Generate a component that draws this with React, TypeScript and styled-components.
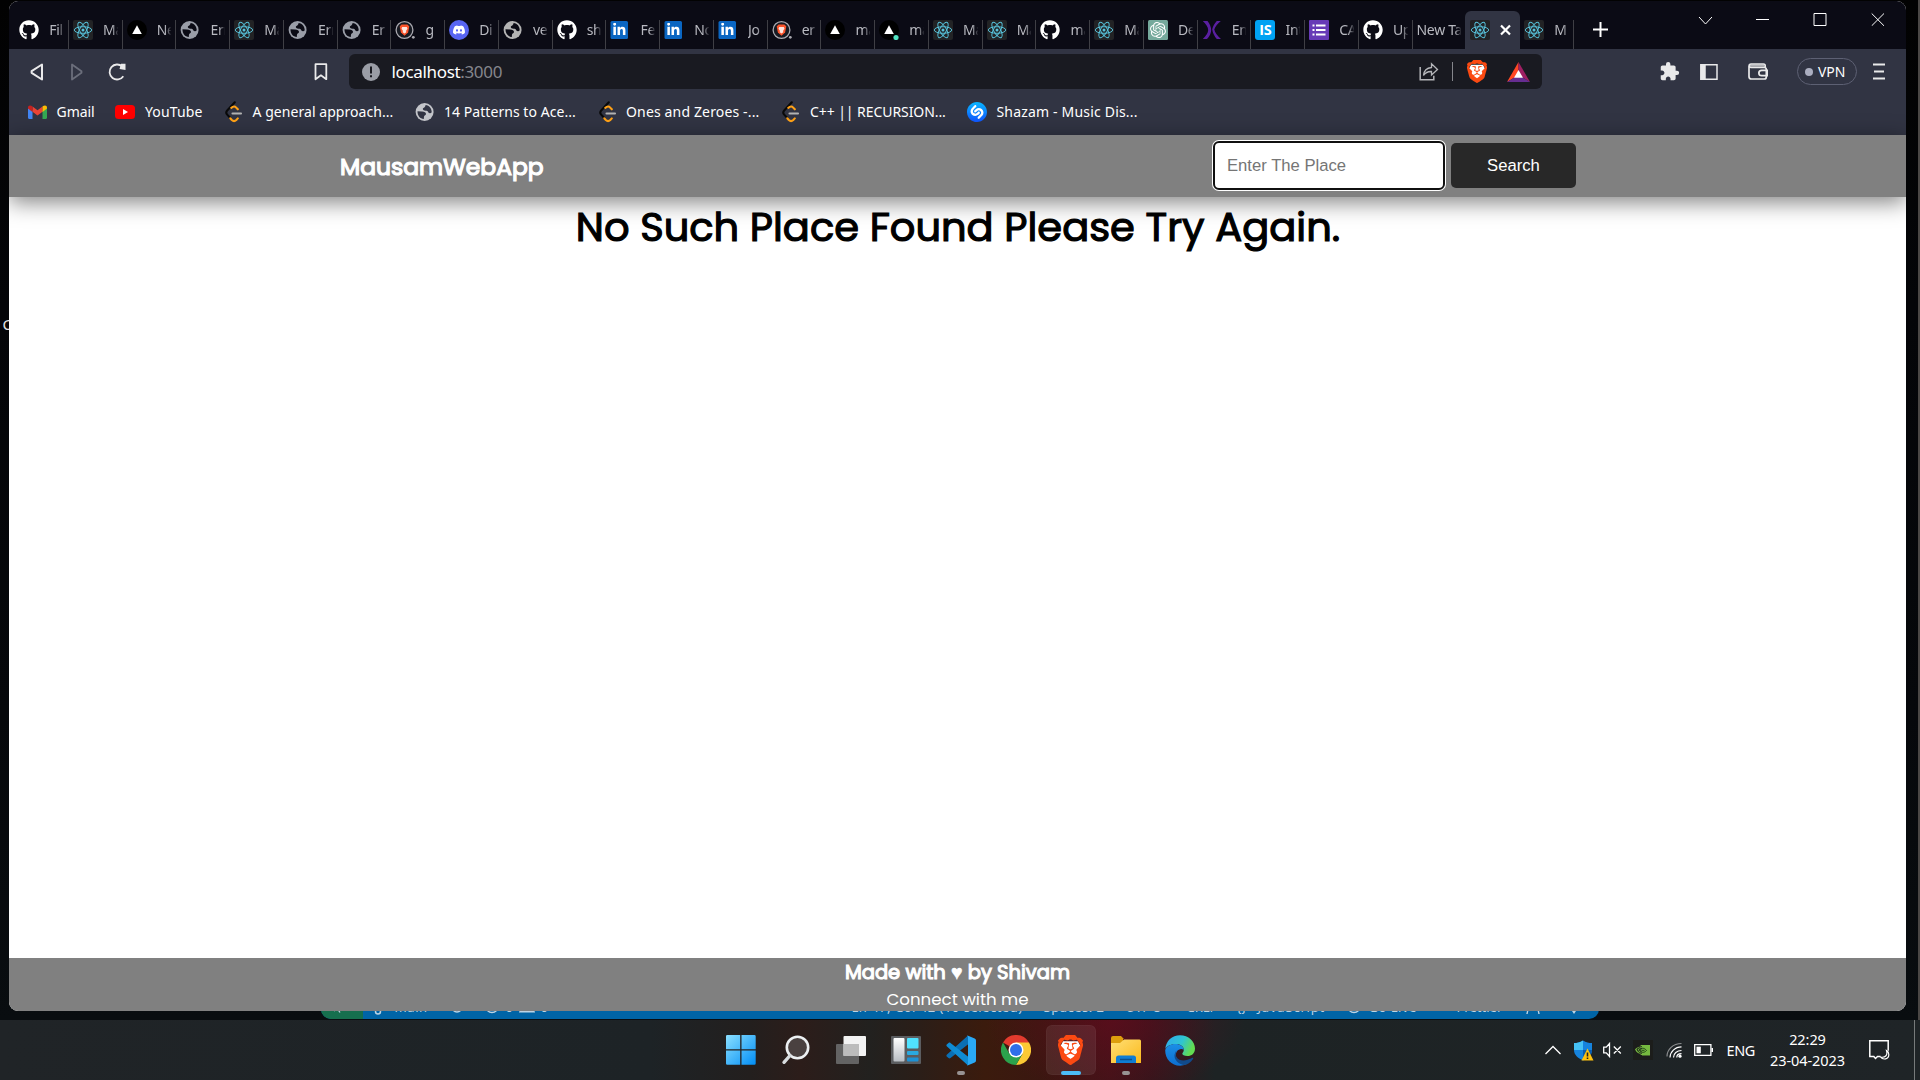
import React from "react";
import styled, { createGlobalStyle, css } from "styled-components";
import { FaGithub, FaDiscord, FaLinkedinIn } from "react-icons/fa";
import { SiBrave, SiShazam, SiOpenai, SiNvidia } from "react-icons/si";
import { MdExtension } from "react-icons/md";

const ui = `"Segoe UI", "Noto Sans", "Open Sans", sans-serif`;
const poppins = `Poppins, Inter, "Noto Sans", sans-serif`;

const Global = createGlobalStyle`
  * { box-sizing: border-box; }
  html, body { margin: 0; padding: 0; background: #050608; overflow: hidden; }
  svg { display: block; flex: none; }
`;

/* ---------- desktop ---------- */
const Screen = styled.div`
  width: 1920px;
  height: 1080px;
  display: grid;
  grid-template-rows: 1020px 60px;
  overflow: hidden;
  font-family: ${ui};
`;
const Desktop = styled.main`
  position: relative;
  overflow: hidden;
  background: linear-gradient(#020202 0%, #040508 30%, #06080b 70%, #090d10 100%);
  border-right: 2px solid #4a4745;
`;
const DesktopLabel = styled.span`
  position: absolute;
  left: 2.5px;
  top: 315px;
  font-size: 15px;
  line-height: 19px;
  color: #e4e4e4;
`;
const BrowserWindow = styled.section`
  position: absolute;
  left: 9px;
  top: 1px;
  width: 1897px;
  height: 1010px;
  display: flex;
  flex-direction: column;
  border-radius: 9px;
  overflow: hidden;
  background: #fff;
`;

/* ---------- editor status bar behind the browser ---------- */
const StatusBar = styled.section`
  position: absolute;
  left: 321px;
  top: 992px;
  width: 1278px;
  height: 27px;
  display: flex;
  background: #0064a6;
  border-radius: 0 0 10px 10px;
  overflow: hidden;
  color: #bcd3e4;
  font-size: 13px;
  line-height: 31px;
  white-space: nowrap;
`;
const Remote = styled.div`
  width: 42px;
  background: #166f4e;
  padding: 8px 0 0 12px;
`;
const StatusItem = styled.div<{ $w: number; $ls?: number }>`
  width: ${(p) => p.$w}px;
  letter-spacing: ${(p) => p.$ls ?? 0}px;
  flex: none;
  svg { margin-top: 7px; }
`;

/* ---------- tab strip ---------- */
const TabStrip = styled.div`
  height: 48px;
  flex: none;
  background: #0b0b15;
  display: flex;
  align-items: flex-end;
  padding-left: 6px;
`;
const TabBox = styled.div<{ $active?: boolean; $plain?: boolean }>`
  width: 53.76px;
  height: 29px;
  flex: none;
  display: flex;
  align-items: flex-start;
  gap: 10px;
  padding: 0 4px 0 ${(p) => (p.$plain ? "4px" : "4.2px")};
  border-right: 1px solid #3f3f45;
  color: #b8b9c0;
  ${(p) =>
    p.$active &&
    css`
      height: 38px;
      padding-top: 9px;
      padding-right: 0;
      background: #313443;
      border-radius: 6px 6px 0 0;
      border-right: 0;
      margin-left: -1px;
      padding-left: 5.2px;
      width: 54.76px;
    `}
`;
const TabText = styled.span`
  flex: 1;
  min-width: 0;
  overflow: hidden;
  white-space: nowrap;
  font-size: 14px;
  line-height: 20px;
  letter-spacing: -0.3px;
  mask-image: linear-gradient(90deg, #000 calc(100% - 6px), rgba(0, 0, 0, 0.1));
`;
const NewTab = styled.div`
  padding: 0 0 12px 19.5px;
`;
const WindowControls = styled.div`
  margin-left: auto;
  align-self: flex-start;
  display: flex;
  align-items: center;
  gap: 43.6px;
  padding: 11px 21px 0 0;
`;

/* ---------- toolbar ---------- */
const Toolbar = styled.div`
  height: 46px;
  flex: none;
  display: flex;
  align-items: center;
  background: #313443;
  color: #e9e9ea;
  padding-bottom: 1px;
`;
const Slot = styled.div<{ $w: number }>`
  width: ${(p) => p.$w}px;
  flex: none;
  display: flex;
`;
const AddressBar = styled.div`
  width: 1193px;
  height: 35px;
  flex: none;
  display: flex;
  align-items: center;
  border-radius: 6px;
  background: #191a21;
  padding: 0 12px 0 13px;
`;
const Url = styled.div`
  margin-left: 11.5px;
  flex: 1;
  font-size: 17px;
  line-height: 24px;
  letter-spacing: -0.34px;
  color: #fff;
  span { color: #85868c; }
`;
const Divider = styled.div`
  width: 1px;
  height: 19px;
  background: #85868c;
  margin: 0 14px 0 13px;
`;
const Vpn = styled.div`
  width: 60px;
  height: 27px;
  border: 1px solid #5d6073;
  border-radius: 14px;
  display: flex;
  align-items: center;
  gap: 5px;
  padding-left: 7px;
  font-size: 14px;
  letter-spacing: -0.1px;
  color: #fff;
`;
const Dot = styled.i`
  width: 8px;
  height: 8px;
  border-radius: 50%;
  background: #abaec0;
`;

/* ---------- bookmarks ---------- */
const Bookmarks = styled.div`
  height: 40px;
  flex: none;
  display: flex;
  align-items: center;
  background: #313443;
  padding: 0 0 6px 18.5px;
`;
const Bookmark = styled.div<{ $w: number; $ls: number; $gap: number }>`
  width: ${(p) => p.$w}px;
  flex: none;
  display: flex;
  align-items: center;
  gap: ${(p) => p.$gap}px;
  color: #fff;
  font-size: 14px;
  line-height: 20px;
  letter-spacing: ${(p) => p.$ls}px;
  white-space: nowrap;
`;

/* ---------- web page ---------- */
const PageHeader = styled.header`
  position: relative;
  height: 62px;
  flex: none;
  background: #808080;
  box-shadow: 0 5px 22px rgba(0, 0, 0, 0.5);
  display: flex;
  justify-content: space-between;
  align-items: center;
  padding: 0 330px 1px 331px;
`;
const Brand = styled.h1`
  margin: 0;
  font: 400 23.4px/35px ${poppins};
  padding-top: 1px;
  -webkit-text-stroke: 1.2px #fff;
  color: #fff;
`;
const SearchForm = styled.form`
  display: flex;
  align-items: center;
  gap: 6px;
  margin: 0;
`;
const PlaceInput = styled.input`
  width: 232px;
  height: 49px;
  border: 2px solid #101010;
  border-radius: 6px;
  box-shadow: 0 0 0 1px #fff;
  outline: none;
  padding: 0 12px;
  background: #fff;
  font: 16.67px "Liberation Sans", Arial, sans-serif;
  &::placeholder { color: #757575; opacity: 1; }
`;
const SearchButton = styled.button`
  width: 125px;
  height: 45px;
  border: 0;
  border-radius: 5px;
  background: #282828;
  color: #fff;
  font: 16.67px "Liberation Sans", Arial, sans-serif;
`;
const PageBody = styled.div`
  flex: 1;
  text-align: center;
`;
const Message = styled.p`
  position: relative;
  margin: 0;
  padding-left: 1px;
  font: 400 40px/60px ${poppins};
  -webkit-text-stroke: 1.2px #000;
  color: #000;
`;
const PageFooter = styled.footer`
  height: 53px;
  flex: none;
  background: #808080;
  color: #fff;
  text-align: center;
  font-family: ${poppins};
`;
const Credit = styled.div`
  font-size: 19.5px;
  line-height: 29px;
  -webkit-text-stroke: 1.1px #fff;
`;
const Heart = styled.span`
  font-family: "Liberation Sans", sans-serif;
  -webkit-text-stroke: 0.6px #fff;
`;
const Connect = styled.div`
  font-size: 16.67px;
  line-height: 25px;
`;

/* ---------- taskbar ---------- */
const TaskbarRow = styled.footer`
  display: flex;
  background:
    radial-gradient(ellipse 130px 75px at 1115px 0, rgba(105, 10, 30, 0.55), transparent),
    linear-gradient(90deg, #202427 0, #1d2326 650px, #231f1e 750px, #2c1d1a 800px, #22211f 870px, #2b1e18 920px, #3b1b0d 985px, #3a1710 1040px, #421318 1110px, #35151b 1150px, #1d2324 1215px, #1f2427 1920px);
`;
const TaskButtons = styled.div`
  display: flex;
  margin-left: 714px;
`;
const TaskButton = styled.div<{ $active?: boolean }>`
  width: 50px;
  height: 50px;
  margin: 5px 2.45px;
  border-radius: 6px;
  display: grid;
  grid-template-rows: 46px 4px;
  place-items: center;
  svg { margin-top: 4px; }
  ${(p) =>
    p.$active &&
    css`
      background: rgba(255, 255, 255, 0.08);
      box-shadow: inset 0 0 0 1px rgba(255, 255, 255, 0.03);
    `}
`;
const Indicator = styled.i<{ $active?: boolean }>`
  width: ${(p) => (p.$active ? 20 : 8)}px;
  height: 4px;
  border-radius: 2px;
  background: ${(p) => (p.$active ? "#4cbcf8" : "#989393")};
`;
const Tray = styled.div`
  margin-left: auto;
  height: 60px;
  display: flex;
  align-items: center;
  color: #fff;
`;
const Lang = styled.div`
  width: 43px;
  font-size: 14.5px;
  letter-spacing: -0.4px;
`;
const Clock = styled.div`
  width: 76px;
  text-align: center;
  font-size: 14.5px;
  line-height: 21px;
  letter-spacing: -0.08px;
  white-space: nowrap;
`;
const ShowDesktop = styled.div`
  width: 6px;
  height: 60px;
  margin-left: 24.5px;
  border-left: 1px solid #777a7b;
`;

/* ---------- drawings ---------- */
const ReactIcon = () => (
  <svg width="20" height="20" viewBox="0 0 20 20">
    <rect width="20" height="20" rx="2" fill="#222325" />
    <g fill="none" stroke="#58c4dc" strokeWidth="0.95">
      <ellipse cx="10" cy="10" rx="8.7" ry="3.3" />
      <ellipse cx="10" cy="10" rx="8.7" ry="3.3" transform="rotate(60 10 10)" />
      <ellipse cx="10" cy="10" rx="8.7" ry="3.3" transform="rotate(120 10 10)" />
    </g>
    <circle cx="10" cy="10" r="1.5" fill="#58c4dc" />
  </svg>
);
const VercelIcon = ({ dot }: { dot?: boolean }) => (
  <svg width="20" height="20" viewBox="0 0 20 20">
    <circle cx="10" cy="10" r="10" fill="#000" />
    <path d="M10 5.2 14.8 14H5.2z" fill="#fff" />
    {dot && <circle cx="17" cy="17.5" r="2.6" fill="#50e3c2" />}
  </svg>
);
const Globe = ({ c = "#9a9ea8", bg = "#0b0b15" }: { c?: string; bg?: string }) => (
  <svg width="20" height="20" viewBox="0 0 20 20">
    <circle cx="9.6" cy="10" r="9" fill={c} />
    <path
      fill={bg}
      d="M10.6 2.9C14.4 3.3 16.8 6.6 16.7 10.2 15.9 11.8 14 11.6 13.2 10.2 12.7 9.1 12.2 8.8 10.8 8.8 8.5 8.8 7.5 7.8 7.9 6.6 8.3 5.4 10.3 5.5 10.6 2.9ZM2.5 9.2 7 9.4C9.6 9.6 11 10.4 11 12 11 13.5 9.3 13.3 9 14.5L8.8 17C5.2 16.8 2.3 13.5 2.5 9.2Z"
    />
  </svg>
);
const BraveTab = () => (
  <svg width="20" height="20" viewBox="0 0 20 20">
    <circle cx="9.5" cy="10" r="8.4" fill="#171a22" stroke="#aaa9b0" strokeWidth="1.3" />
    <path d="M6.500 4.500h6l1.800 2-1.200 6-3.600 3.300L5.900 12.500 4.700 6.500z" fill="#fb542b" />
    <path d="M7.200 7h4.600l.7 1.800-1.400 2 .2 1.400-1.800 1.400-1.800-1.400.2-1.400-1.400-2z" fill="#fff" opacity=".85" />
    <circle cx="18.3" cy="17.3" r="1.4" fill="#aaa9b0" />
  </svg>
);
const BraveLogo = ({ w, h }: { w: number; h: number }) => (
  <svg width={w} height={h} viewBox="2 0 20 24" preserveAspectRatio="none">
    <path d="M6 5h12l2 4-3 9-5 4-5-4L4 9z" fill="#fff" />
    <SiBrave size={24} color="#fb4a12" />
  </svg>
);
const Discord = () => (
  <svg width="20" height="20" viewBox="0 0 20 20">
    <circle cx="10" cy="10" r="10" fill="#5865f2" />
    <FaDiscord x={3.5} y={3.5} size={13} color="#fff" />
  </svg>
);
const LinkedIn = () => (
  <svg width="20" height="20" viewBox="0 0 20 20">
    <rect x=".5" y="1" width="17.5" height="18" rx="1.5" fill="#0a66c2" />
    <FaLinkedinIn x={2.3} y={2.8} size={14} color="#fff" />
  </svg>
);
const OpenAi = () => (
  <svg width="20" height="20" viewBox="0 0 20 20">
    <rect width="20" height="20" rx="1.5" fill="#75a99c" />
    <SiOpenai x={2} y={2} size={16} color="#fff" />
  </svg>
);
const XIcon = () => (
  <svg width="20" height="20" viewBox="0 0 20 20" fill="#5a1fa0">
    <path d="M.8 1H5.500C7.500 3.500 9.200 7 9.200 10 9.200 13 7.500 16.500 5 19H.8C3.800 16 6.200 13 6.200 10 6.200 7 3.800 4 .8 1Z" />
    <path d="M18.800 1H14.800C12.500 3.500 10.800 6.500 10.200 9.300 10.600 13 12.600 16.500 14.800 19H19C15.800 16 12.600 12.500 12.300 9.500 13.200 6.500 15.800 3.500 18.800 1Z" />
  </svg>
);
const IsText = styled.span`
  width: 20px;
  height: 20px;
  flex: none;
  border-radius: 3px;
  background: #00a2f3;
  color: #fff;
  font: 700 14.5px/20px "Open Sans", sans-serif;
  text-align: center;
  letter-spacing: -0.3px;
`;
const FormsIcon = () => (
  <svg width="20" height="20" viewBox="0 0 20 20">
    <rect width="20" height="20" rx="1" fill="#673ab7" />
    <path d="M3.500 4.500h2v2h-2zM7 4.500h9.500v2H7zM3.500 9h2v2h-2zM7 9h9.500v2H7zM3.500 13.500h2v2h-2zM7 13.500h9.500v2H7z" fill="#fff" />
  </svg>
);
const Gmail = () => (
  <svg width="19" height="14" viewBox="0 0 19 14">
    <path d="M0 3v9.800c0 .7.500 1.200 1.200 1.200H4.500V5.500z" fill="#4285f4" />
    <path d="M19 3v9.800c0 .7-.5 1.200-1.200 1.200h-3.300V5.500z" fill="#34a853" />
    <path d="M4.500 1.500 9.500 5.300l5-3.800v5.300l-5 3.800-5-3.800z" fill="#ea4335" />
    <path d="M14.500 1.500C16.500-.3 19 .2 19 2.500v1.100l-4.500 3.300z" fill="#fbbc04" />
    <path d="M4.500 1.500C2.500-.3 0 .2 0 2.500v1.100l4.500 3.300z" fill="#c5221f" />
  </svg>
);
const YouTube = () => (
  <svg width="20" height="14" viewBox="0 0 20 14">
    <rect width="20" height="14" rx="3.5" fill="#f00" />
    <path d="M8 4v6l5-3z" fill="#fff" />
  </svg>
);
const LeetCode = () => (
  <svg width="18" height="22" viewBox="0 0 18 22" fill="none" strokeWidth="2.1" strokeLinecap="round" strokeLinejoin="round">
    <path d="M9.800 1.300 2.200 9.500C1 10.800 1 12.300 2.200 13.600L5.300 17" stroke="#090909" />
    <path d="M6.300 6.800 7.800 5.900C9 5.200 10.200 5.500 11.200 6.600L12.800 8.300M5.300 17.300 6.800 19C8.200 20.400 10 20.300 11.300 19L12.800 17.400" stroke="#ffa116" />
    <path d="M7.500 12.500h8.500" stroke="#b3b3b3" />
  </svg>
);
const Shazam = () => (
  <svg width="20" height="20" viewBox="0 0 20 20">
    <defs>
      <linearGradient id="shz" x1="0" y1="0" x2="0" y2="1">
        <stop stopColor="#08b6ff" />
        <stop offset="1" stopColor="#1055ff" />
      </linearGradient>
    </defs>
    <circle cx="10" cy="10" r="9" fill="#fff" />
    <SiShazam size={20} fill="url(#shz)" />
  </svg>
);
const line = { fill: "none", stroke: "currentColor" } as const;

type Tab = { icon?: React.ReactNode; text?: string; active?: boolean };
const gh = <FaGithub size={20} color="#fff" />;
const r = <ReactIcon />;
const tabs: Tab[] = [
  { icon: gh, text: "Fil" },
  { icon: r, text: "Ma" },
  { icon: <VercelIcon />, text: "Ne" },
  { icon: <Globe />, text: "Err" },
  { icon: r, text: "Ma" },
  { icon: <Globe />, text: "Err" },
  { icon: <Globe />, text: "Err" },
  { icon: <BraveTab />, text: "g" },
  { icon: <Discord />, text: "Di" },
  { icon: <Globe c="#b4b4b4" />, text: "ve" },
  { icon: gh, text: "sh" },
  { icon: <LinkedIn />, text: "Fe" },
  { icon: <LinkedIn />, text: "No" },
  { icon: <LinkedIn />, text: "Jo" },
  { icon: <BraveTab />, text: "err" },
  { icon: <VercelIcon />, text: "ma" },
  { icon: <VercelIcon dot />, text: "ma" },
  { icon: r, text: "Ma" },
  { icon: r, text: "Ma" },
  { icon: gh, text: "ma" },
  { icon: r, text: "Ma" },
  { icon: <OpenAi />, text: "De" },
  { icon: <XIcon />, text: "En" },
  { icon: <IsText>IS</IsText>, text: "Int" },
  { icon: <FormsIcon />, text: "CA" },
  { icon: gh, text: "Up" },
  { text: "New Ta" },
  { icon: r, active: true },
  { icon: r, text: "M" },
];

const bookmarks = [
  { icon: <Gmail />, text: "Gmail", w: 87.5, ls: -0.05, gap: 10 },
  { icon: <YouTube />, text: "YouTube", w: 109.5, ls: 0.15, gap: 10 },
  { icon: <LeetCode />, text: "A general approach...", w: 190, ls: 0.05, gap: 10 },
  { icon: <Globe c="#c3c5ca" bg="#313443" />, text: "14 Patterns to Ace...", w: 184, ls: 0.05, gap: 9.5 },
  { icon: <LeetCode />, text: "Ones and Zeroes -...", w: 183, ls: 0.15, gap: 9.5 },
  { icon: <LeetCode />, text: "C++ || RECURSION...", w: 185.5, ls: -0.07, gap: 10.5 },
  { icon: <Shazam />, text: "Shazam - Music Dis...", w: 200, ls: 0.18, gap: 9.5 },
];

const TabRow = () => (
  <TabStrip>
    {tabs.map((t, i) => (
      <TabBox key={i} $active={t.active} $plain={!t.icon}>
        {t.icon}
        {t.active ? (
          <svg width="11" height="20" viewBox="0 0 11 20" fill="none" stroke="#fff" strokeWidth="2.2">
            <path d="m1 5.500 9 9m0-9-9 9" />
          </svg>
        ) : (
          <TabText>{t.text}</TabText>
        )}
      </TabBox>
    ))}
    <NewTab>
      <svg width="15" height="15" viewBox="0 0 15 15" fill="none" stroke="#fff" strokeWidth="2">
        <path d="M0 7.500h15M7.500 0v15" />
      </svg>
    </NewTab>
    <WindowControls>
      <svg width="14" height="14" viewBox="0 0 14 14" fill="none" stroke="#fff"><path d="m1 5 6.500 7L14 5" /></svg>
      <svg width="14" height="14" viewBox="0 0 14 14" fill="none" stroke="#fff"><path d="M0 7.500h13" /></svg>
      <svg width="14" height="14" viewBox="0 0 14 14" fill="none" stroke="#fff"><path d="M1 1.500h12v12H1z" /></svg>
      <svg width="14" height="14" viewBox="0 0 14 14" fill="none" stroke="#fff"><path d="m.7 1.500 12.300 12.300m0-12.300L.7 13.800" /></svg>
    </WindowControls>
  </TabStrip>
);

const ToolRow = () => (
  <Toolbar>
    <Slot $w={21} />
    <Slot $w={40}>
      <svg width="14" height="18" viewBox="0 0 14 18" {...line} strokeWidth="2" strokeLinejoin="round"><path d="M12 1.500v15L1.600 9.800V8.200z" /></svg>
    </Slot>
    <Slot $w={37.5}>
      <svg width="14" height="18" viewBox="0 0 14 18" fill="none" stroke="#6b6e7b" strokeWidth="1.8" strokeLinejoin="round"><path d="M2 1.500v15l9.500-6.700V8.200z" /></svg>
    </Slot>
    <Slot $w={206.5}>
      <svg width="19" height="18" viewBox="0 0 19 18" {...line} strokeWidth="1.8">
        <path d="M14.300 3.600A7.500 7.500 0 1 0 15.300 13.200" />
        <path d="M13 .8h4.500V7L11.500 6z" fill="currentColor" stroke="none" />
      </svg>
    </Slot>
    <Slot $w={35}>
      <svg width="14" height="18" viewBox="0 0 14 18" {...line} strokeWidth="1.8" strokeLinejoin="round"><path d="M1.500 1.200h10.800v15L6.900 12.300 1.500 16.200z" /></svg>
    </Slot>
    <AddressBar>
      <svg width="18" height="18" viewBox="0 0 18 18">
        <circle cx="9" cy="9" r="9" fill="#9a9da6" />
        <path d="M8 3.500h2v7H8zM8 12.200h2v2H8z" fill="#191a21" />
      </svg>
      <Url>localhost<span>:3000</span></Url>
      <svg width="20" height="20" viewBox="0 0 20 20" fill="none" stroke="#b3b4b8" strokeWidth="1.5">
        <path d="M1.200 5v12.800h13.600v-4" />
        <path d="M4.500 13.500C5 8.500 8 5.800 12.500 5.500V1.800L18.500 7.500l-6 5.500V9.500C9 9.300 6.500 10.500 4.500 13.500Z" strokeWidth="1.3" />
      </svg>
      <Divider />
      <BraveLogo w={20} h={23} />
      <Slot $w={20.5} />
      <svg width="23" height="20" viewBox="0 0 23 20">
        <path d="M11.500 0 0 20 11.500 13z" fill="#ff4724" />
        <path d="M11.500 0 23 20 11.500 13z" fill="#9e1f63" />
        <path d="M0 20h23l-11.500-7z" fill="#662d91" />
        <path d="M11.500 8 16 15.700H7z" fill="#fff" />
      </svg>
    </AddressBar>
    <Slot $w={117} />
    <Slot $w={41}><MdExtension size={21} /></Slot>
    <Slot $w={48}>
      <svg width="18" height="16" viewBox="0 0 18 16" {...line} strokeWidth="1.5"><path d="M1 .8h16v14.400H1z" /><path d="M1 .8h4v14.400H1z" fill="currentColor" /></svg>
    </Slot>
    <Slot $w={49}>
      <svg width="20" height="17" viewBox="0 0 20 17" {...line} strokeWidth="1.7">
        <path d="M1 3v10.500C1 15 2 16 3.500 16h12.800c1.200 0 2-.8 2-2V6.500c0-1.200-.8-2-2-2H3C.5 4.500.5 1 3 1h12.500c1 0 1.700.8 1.700 2v1.500" />
        <path d="M2 1.500h14v2.200H2z" fill="currentColor" stroke="none" opacity=".7" />
        <path d="M19.200 7.300h-5.500c-3.800 0-3.800 5.400 0 5.400h5.500z" />
      </svg>
    </Slot>
    <Slot $w={76}><Vpn><Dot />VPN</Vpn></Slot>
    <svg width="12" height="17" viewBox="0 0 12 17" {...line} strokeWidth="1.9"><path d="M0 1.500h12M1 8.500h10M0 15.500h12" /></svg>
  </Toolbar>
);

const Start = () => (
  <svg width="30" height="30" viewBox="0 0 30 30">
    <defs><linearGradient id="win" gradientUnits="userSpaceOnUse" x1="0" y1="0" x2="30" y2="30"><stop stopColor="#8be0ff" /><stop offset="1" stopColor="#008df5" /></linearGradient></defs>
    <path fill="url(#win)" d="M1.300 0h12.900v14.200H0V1.300Q0 0 1.300 0zM15.500 0h12.900q1.300 0 1.300 1.300v12.900H15.500zM0 15.500h14.200v14.200H1.300Q0 29.700 0 28.400zM15.500 15.500h14.200v12.900q0 1.300-1.300 1.300H15.500z" />
  </svg>
);
const SearchIcon = () => (
  <svg width="30" height="30" viewBox="0 0 30 30">
    <circle cx="16.5" cy="12.5" r="10.7" fill="#4a4140" stroke="#edf0f2" strokeWidth="2.6" />
    <path d="m9 20.500-6 6.800" stroke="#d8dcdf" strokeWidth="3.4" strokeLinecap="round" />
  </svg>
);
const TaskView = () => (
  <svg width="30" height="30" viewBox="0 0 30 30">
    <rect x="0" y="9" width="23" height="20" rx="1" fill="#636363" />
    <rect x="7.5" y="1" width="22.5" height="20" rx="1" fill="#f3f3f3" />
    <path d="M7.500 9H23v12H7.500z" fill="#bcbcbc" />
  </svg>
);
const Widgets = () => (
  <svg width="30" height="30" viewBox="0 0 30 30">
    <defs><linearGradient id="wg" x1="0" y1="0" x2="0" y2="1"><stop stopColor="#fff" /><stop offset="1" stopColor="#b9bec4" /></linearGradient></defs>
    <rect x="0" y="1" width="30" height="28" rx="1" fill="#5b5d60" />
    <rect x="2.5" y="3" width="11" height="23.5" rx="1" fill="url(#wg)" />
    <rect x="16" y="3" width="11.5" height="10.5" rx="1" fill="#50e2ff" />
    <rect x="16" y="16" width="11.5" height="4" rx="1" fill="#2aa9e0" />
    <rect x="16" y="22.5" width="11.5" height="4" rx="1" fill="#1d92d6" />
  </svg>
);
const VsCode = () => (
  <svg width="30" height="31" viewBox="0 0 30 31">
    <path d="M22 .5 1 19.500c-.8.800-.8 1.600 0 2.300l1.500 1.300c.7.500 1.400.5 2 0L22.500 9z" fill="#0a6fb4" />
    <path d="M22 30.500 1 11.500c-.8-.8-.8-1.600 0-2.300L2.500 8c.7-.6 1.400-.6 2 0l18 14z" fill="#0f8bd3" />
    <path d="M21.500.5 28.700 3.500q1.300.7 1.300 2v20q0 1.300-1.300 2l-7.200 3c-.8.300.5-.5.500-2v-26c0-1.500-1.300-2.300-.5-2z" fill="#2aa9f5" />
  </svg>
);
const Chrome = () => (
  <svg width="30" height="30" viewBox="0 0 30 30">
    <path d="M15 15 2 7.500A15 15 0 0 1 28 7.500z" fill="#e33b2e" />
    <path d="M15 15V7.500h13A15 15 0 0 1 15 30l6.500-11.200z" fill="#fcc934" />
    <path d="M15 30A15 15 0 0 1 2 7.500l6.500 11.250L15 22.500l6.500-3.700z" fill="#2ba24c" />
    <circle cx="15" cy="15" r="7.5" fill="#fff" />
    <circle cx="15" cy="15" r="6" fill="#2f6fe8" />
  </svg>
);
const Explorer = () => (
  <svg width="30" height="28" viewBox="0 0 30 28">
    <defs><linearGradient id="fold" x1="0" y1="0" x2="1" y2="1"><stop stopColor="#ffdf75" /><stop offset="1" stopColor="#fbb91c" /></linearGradient></defs>
    <path d="M0 2Q0 0 2 0h8l3 3h-1v5H0z" fill="#dd9e0d" />
    <path d="M0 7h9l4-3.500h15.500Q30 3.500 30 5v22H0z" fill="url(#fold)" />
    <path d="M5 27v-5q0-2.500 2.500-2.500h15Q25 19.500 25 22v5z" fill="#0f7dd4" />
    <path d="M9 23.500h12" stroke="#0a4f8e" strokeWidth="1.5" />
  </svg>
);
const Edge = () => (
  <svg width="30" height="31" viewBox="0 0 30 31">
    <defs>
      <linearGradient id="e1" x1="0" y1="0" x2="1" y2=".35"><stop stopColor="#2fa8ee" /><stop offset=".6" stopColor="#2fc4d2" /><stop offset="1" stopColor="#62dc52" /></linearGradient>
      <linearGradient id="e2" x1="0" y1="0" x2="0" y2="1"><stop stopColor="#1b8ee6" /><stop offset="1" stopColor="#0d6ed0" /></linearGradient>
    </defs>
    <path d="M.3 14C1 6 7 .3 15 .3 23.500.3 30 6.500 30 13.500c0 5-3.500 7.500-7.500 7.500-3.500 0-5.200-1.200-5.200-2.300 0-1 1.500-1.500 1.500-4C18.800 11.500 15.500 9 11 9 5.500 9 1.500 11.500.3 14Z" fill="url(#e1)" />
    <path d="M.2 15C1.500 11.500 5.500 9 10.500 9c4.500 0 8.300 2.500 8.300 5.700C14 12.500 10 17 11 21.500c1 5 6 7.500 10.500 7.500-2 1.300-4.500 1.700-6.500 1.700C6.500 30.700 0 24 .2 15Z" fill="url(#e2)" />
    <path d="M11.500 15.500c-3.500 7.500 4.500 13.500 15.500 7.500 1-.5 1.600 0 1 1C25.500 28 22.500 29.500 19 30c-7-1-12.500-8-7.500-14.500Z" fill="#114a8b" />
  </svg>
);

const taskItems: { icon: React.ReactNode; open?: boolean; active?: boolean }[] = [
  { icon: <Start /> },
  { icon: <SearchIcon /> },
  { icon: <TaskView /> },
  { icon: <Widgets /> },
  { icon: <VsCode />, open: true },
  { icon: <Chrome /> },
  { icon: <BraveLogo w={25} h={30} />, open: true, active: true },
  { icon: <Explorer />, open: true },
  { icon: <Edge /> },
];

const Taskbar = () => (
  <TaskbarRow>
    <TaskButtons>
      {taskItems.map((t, i) => (
        <TaskButton key={i} $active={t.active}>
          {t.icon}
          {t.open && <Indicator $active={t.active} />}
        </TaskButton>
      ))}
    </TaskButtons>
    <Tray>
      <Slot $w={29}>
        <svg width="16" height="10" viewBox="0 0 16 10" {...line} strokeWidth="1.3"><path d="m.5 9 7.500-7.500L15.500 9" /></svg>
      </Slot>
      <Slot $w={29}>
        <svg width="20" height="21" viewBox="0 0 20 21">
          <path d="M9 .5c3 2 6 2.500 9 2.500v7c0 5-4 8-9 10.500C4 18 0 15 0 10V3C3 3 6 2.500 9 .5Z" fill="#1683dd" />
          <path d="M9 .5V10H0V3C3 3 6 2.500 9 .5Z" fill="#45c1f5" />
          <path d="M9 10h9c0 5-4 8-9 10.500z" fill="#0a5cb0" />
          <path d="m13.500 8.500 6 12h-12z" fill="#ffc20e" />
          <path d="M12.700 12.500h1.600v4h-1.600zM12.700 17.500h1.600V19h-1.600z" fill="#222" />
        </svg>
      </Slot>
      <Slot $w={30}>
        <svg width="19" height="16" viewBox="0 0 19 16" {...line} strokeWidth="1.3"><path d="M.7 5.200h2.600L6.500 1.500v13L3.300 10.800H.7zM10.800 4.500l7 7m0-7-7 7" /></svg>
      </Slot>
      <Slot $w={33}>
        <svg width="20" height="20" viewBox="0 0 20 20">
          <path d="M0 0h20v20H0z" fill="#1c1d1b" />
          <path d="M9 5h8v10.500H9z" fill="#76b93f" />
          <SiNvidia x={2} y={2.5} size={15} color="#76b93f" />
          <path d="M5.500 10.500c2-3 6-3 8 0-2 2.500-5.500 2.500-7-.5M8.500 10.300h3" fill="none" stroke="#24431a" />
        </svg>
      </Slot>
      <Slot $w={28}>
        <svg width="17" height="17" viewBox="0 0 17 17" {...line} strokeWidth="1.2">
          <path d="M1 14.500C1 7.500 7 1.500 15.500 1.500" stroke="#8b8d8f" />
          <path d="M4 15.500C4 10 9 4.800 15.500 4.800M7.500 15.500c0-4 3.500-7 8-7M10.800 15.500c0-2.200 2-3.800 4.700-3.800" />
          <circle cx="14" cy="14.2" r="1.6" fill="currentColor" stroke="none" />
        </svg>
      </Slot>
      <Slot $w={32.5}>
        <svg width="19" height="12" viewBox="0 0 19 12" {...line} strokeWidth="1.3"><path d="M.7.700h16.200v10.600H.7zM18.400 4v4" /><path d="M2.500 2.700h4.300v6.600H2.500z" fill="currentColor" stroke="none" /></svg>
      </Slot>
      <Lang>ENG</Lang>
      <Clock>22:29<br />23-04-2023</Clock>
      <Slot $w={23} />
      <svg width="21" height="20" viewBox="0 0 21 20" {...line} strokeWidth="1.5">
        <path d="M11.500 16.500H8.500L6.500 18.500 4.800 16.500H.8V.8h18.400v10" />
        <path d="M17.500 10.500c1.500 5-1.500 7.500-6 6.500 2.500 3.200 8.500 2.500 8.300-2.500 0-1.800-.8-3.200-2.300-4Z" strokeWidth="1.2" />
      </svg>
      <ShowDesktop />
    </Tray>
  </TaskbarRow>
);

const StatusRing = () => (
  <svg width="14" height="16" viewBox="0 0 14 16" {...line} strokeWidth="1.5"><circle cx="7" cy="7.5" r="6" /></svg>
);

const EditorStatus = () => (
  <StatusBar>
    <Remote><svg width="10" height="14" viewBox="0 0 10 14" {...line} strokeWidth="1.3"><path d="m1 1 5 5-5 5M9 3 4 8l3 4.500" /></svg></Remote>
    <StatusItem $w={31.5}><svg width="30" height="18" viewBox="0 0 30 18" {...line} strokeWidth="1.5"><circle cx="15" cy="12.5" r="2.5" /><path d="M15 10V3" /></svg></StatusItem>
    <StatusItem $w={56} $ls={0.6}>main</StatusItem>
    <StatusItem $w={34}><svg width="12" height="16" viewBox="0 0 12 16" {...line} strokeWidth="1.5"><circle cx="6" cy="8" r="5" /></svg></StatusItem>
    <StatusItem $w={21}><StatusRing /></StatusItem>
    <StatusItem $w={13}>0</StatusItem>
    <StatusItem $w={22}><svg width="16" height="14" viewBox="0 0 16 14" {...line} strokeWidth="1.5"><path d="M8 1 15 12.800H1z" /></svg></StatusItem>
    <StatusItem $w={311}>0</StatusItem>
    <StatusItem $w={192} $ls={0.5}>Ln 47, Col 42 (10 selected)</StatusItem>
    <StatusItem $w={82} $ls={0.5}>Spaces: 2</StatusItem>
    <StatusItem $w={61}>UTF-8</StatusItem>
    <StatusItem $w={50}>CRLF</StatusItem>
    <StatusItem $w={21}>{"{}"}</StatusItem>
    <StatusItem $w={89} $ls={0.8}>JavaScript</StatusItem>
    <StatusItem $w={22}><StatusRing /></StatusItem>
    <StatusItem $w={67} $ls={0.5}>Go Live</StatusItem>
    <StatusItem $w={21}>✓</StatusItem>
    <StatusItem $w={69}>Prettier</StatusItem>
    <StatusItem $w={41}><svg width="14" height="16" viewBox="0 0 14 16" {...line} strokeWidth="1.5"><circle cx="7" cy="5" r="3" /><path d="M1 15c0-8 12-8 12 0" /></svg></StatusItem>
    <StatusItem $w={14}><svg width="14" height="16" viewBox="0 0 14 16" fill="currentColor"><path d="M0 11.500h14l-2-3V4L7 1 2 4v4.500zM5 12h4l-2 3z" /></svg></StatusItem>
  </StatusBar>
);

export default function App() {
  return (
    <Screen>
      <Global />
      <Desktop>
        <DesktopLabel>C</DesktopLabel>
        <EditorStatus />
        <BrowserWindow>
          <TabRow />
          <ToolRow />
          <Bookmarks>
            {bookmarks.map((b) => (
              <Bookmark key={b.text} $w={b.w} $ls={b.ls} $gap={b.gap}>
                {b.icon}
                {b.text}
              </Bookmark>
            ))}
          </Bookmarks>
          <PageHeader>
            <Brand>MausamWebApp</Brand>
            <SearchForm>
              <PlaceInput placeholder="Enter The Place" />
              <SearchButton type="button">Search</SearchButton>
            </SearchForm>
          </PageHeader>
          <PageBody>
            <Message>No Such Place Found Please Try Again.</Message>
          </PageBody>
          <PageFooter>
            <Credit>Made with <Heart>♥</Heart> by Shivam</Credit>
            <Connect>Connect with me</Connect>
          </PageFooter>
        </BrowserWindow>
      </Desktop>
      <Taskbar />
    </Screen>
  );
}
